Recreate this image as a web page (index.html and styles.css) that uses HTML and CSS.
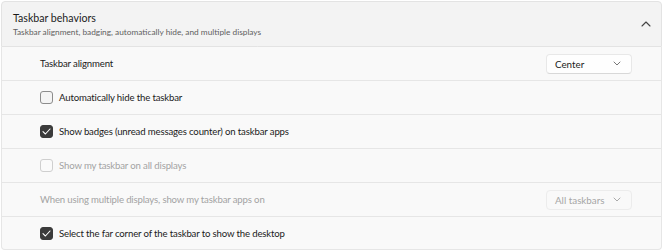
FILE: index.html
```html
<!DOCTYPE html>
<html>
<head>
<meta charset="utf-8">
<link rel="stylesheet" href="styles.css">
</head>
<body>
<div class="panel">
  <div class="header">
    <div class="htext">
      <div class="title">Taskbar behaviors</div>
      <div class="subtitle">Taskbar alignment, badging, automatically hide, and multiple displays</div>
    </div>
    <svg class="chev-up" width="10" height="6" viewBox="0 0 10 6"><path d="M1 5 L5 1 L9 5" fill="none" stroke="#444" stroke-width="1.1" stroke-linecap="round" stroke-linejoin="round"/></svg>
  </div>
  <div class="row">
    <span class="label">Taskbar alignment</span>
    <div class="select"><span>Center</span><svg width="8" height="5" viewBox="0 0 8 5"><path d="M1 1 L4 4 L7 1" fill="none" stroke="#777" stroke-width="1" stroke-linecap="round"/></svg></div>
  </div>
  <div class="row">
    <span class="cb"></span><span class="label">Automatically hide the taskbar</span>
  </div>
  <div class="row">
    <span class="cb checked"><svg width="9" height="7" viewBox="0 0 9 7"><path d="M1 3.6 L3.4 6 L8 1" fill="none" stroke="#fff" stroke-width="1.1" stroke-linecap="round" stroke-linejoin="round"/></svg></span><span class="label">Show badges (unread messages counter) on taskbar apps</span>
  </div>
  <div class="row disabled">
    <span class="cb"></span><span class="label">Show my taskbar on all displays</span>
  </div>
  <div class="row disabled">
    <span class="label">When using multiple displays, show my taskbar apps on</span>
    <div class="select"><span>All taskbars</span><svg width="8" height="5" viewBox="0 0 8 5"><path d="M1 1 L4 4 L7 1" fill="none" stroke="#aaa" stroke-width="1" stroke-linecap="round"/></svg></div>
  </div>
  <div class="row last">
    <span class="cb checked"><svg width="9" height="7" viewBox="0 0 9 7"><path d="M1 3.6 L3.4 6 L8 1" fill="none" stroke="#fff" stroke-width="1.1" stroke-linecap="round" stroke-linejoin="round"/></svg></span><span class="label">Select the far corner of the taskbar to show the desktop</span>
  </div>
</div>
</body>
</html>
```
FILE: styles.css
```css
html, body {
  margin: 0;
  padding: 0;
  background: #ffffff;
}
body {
  font-family: "Lato", "Noto Sans", sans-serif;
  color: #1b1b1b;
  padding: 1px 3px 0 1px;
}
.panel {
  width: 661px;
  display: flex;
  flex-direction: column;
}
.header {
  height: 44px;
  background: #f3f3f3;
  border: 1px solid #e3e3e3;
  border-radius: 4px 4px 0 0;
  display: flex;
  align-items: center;
  justify-content: space-between;
  padding: 2px 10px 0 11px;
  box-sizing: content-box;
  height: 42px;
}
.title {
  font-size: 10.6px;
  line-height: 13px;
}
.subtitle {
  font-size: 8.3px;
  line-height: 12px;
  color: #5f5f5f;
  margin-top: 1px;
}
.chev-up {
  margin-top: -2px;
}
.row {
  height: 33px;
  background: #f9f9f9;
  border: 1px solid #e6e6e6;
  border-top: none;
  display: flex;
  align-items: center;
  padding: 0 29px 0 38px;
  gap: 6px;
}
.row.last {
  height: 32px;
  border-radius: 0 0 4px 4px;
}
.label {
  font-size: 9.6px;
  letter-spacing: -0.15px;
  flex: 1;
}
.cb {
  width: 11px;
  height: 11px;
  border: 1px solid #8c8c8c;
  border-radius: 3px;
  background: #f4f4f4;
  display: flex;
  align-items: center;
  justify-content: center;
}
.cb.checked {
  background: #3b3b3b;
  border-color: #3b3b3b;
}
.disabled .cb {
  border-color: #cfcfcf;
  background: #fafafa;
}
.disabled .label {
  color: #a3a3a3;
}
.select {
  width: 86px;
  height: 20px;
  box-sizing: border-box;
  background: #fefefe;
  border: 1px solid #e8e8e8;
  border-bottom-color: #d8d8d8;
  border-radius: 4px;
  display: flex;
  align-items: center;
  justify-content: space-between;
  padding: 0 10px 0 8px;
  font-size: 9.8px;
}
.disabled .select {
  background: #f9f9f9;
  border-color: #ececec;
  color: #a6a6a6;
}
```
